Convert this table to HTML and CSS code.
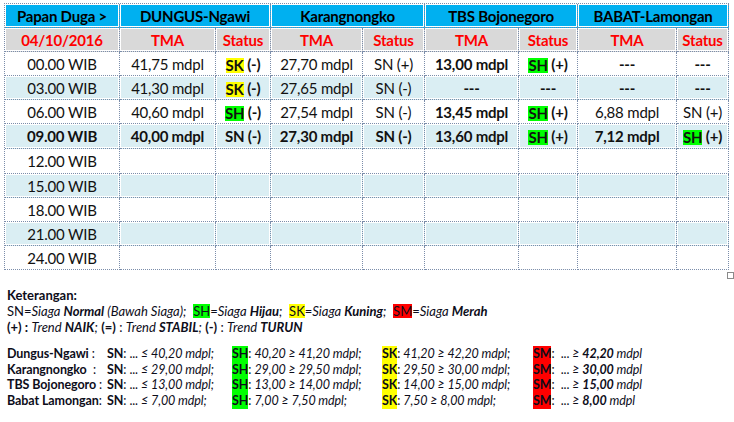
FILE: index.html
```html
<!DOCTYPE html>
<html lang="id">
<head>
<meta charset="utf-8">
<title>Papan Duga</title>
<link rel="stylesheet" href="styles.css">
</head>
<body>
<div class="page">
  <div class="table-wrap">
    <table class="duga">
      <colgroup>
        <col class="w-time"><col class="w-tma1"><col class="w-st1"><col class="w-tma2"><col class="w-st2"><col class="w-tma3"><col class="w-st3"><col class="w-tma4"><col class="w-st4">
      </colgroup>
      <tr class="head1">
        <td>Papan Duga &gt;</td>
        <td colspan="2">DUNGUS-Ngawi</td>
        <td colspan="2">Karangnongko</td>
        <td colspan="2">TBS Bojonegoro</td>
        <td colspan="2">BABAT-Lamongan</td>
      </tr>
      <tr class="head2">
        <td>04/10/2016</td>
        <td>TMA</td><td>Status</td>
        <td>TMA</td><td>Status</td>
        <td>TMA</td><td>Status</td>
        <td>TMA</td><td>Status</td>
      </tr>
      <tr class="row">
        <td>00.00 WIB</td>
        <td>41,75 mdpl</td><td class="b"><span class="hl sk">SK</span> (-)</td>
        <td>27,70 mdpl</td><td>SN (+)</td>
        <td class="b">13,00 mdpl</td><td class="b"><span class="hl sh">SH</span> (+)</td>
        <td class="b">---</td><td class="b">---</td>
      </tr>
      <tr class="row alt">
        <td>03.00 WIB</td>
        <td>41,30 mdpl</td><td class="b"><span class="hl sk">SK</span> (-)</td>
        <td>27,65 mdpl</td><td>SN (-)</td>
        <td class="b">---</td><td class="b">---</td>
        <td class="b">---</td><td class="b">---</td>
      </tr>
      <tr class="row">
        <td>06.00 WIB</td>
        <td>40,60 mdpl</td><td class="b"><span class="hl sh">SH</span> (-)</td>
        <td>27,54 mdpl</td><td>SN (-)</td>
        <td class="b">13,45 mdpl</td><td class="b"><span class="hl sh">SH</span> (+)</td>
        <td>6,88 mdpl</td><td>SN (+)</td>
      </tr>
      <tr class="row alt bold tall">
        <td>09.00 WIB</td>
        <td>40,00 mdpl</td><td>SN (-)</td>
        <td>27,30 mdpl</td><td>SN (-)</td>
        <td>13,60 mdpl</td><td><span class="hl sh">SH</span> (+)</td>
        <td>7,12 mdpl</td><td><span class="hl sh">SH</span> (+)</td>
      </tr>
      <tr class="row tall"><td>12.00 WIB</td><td></td><td></td><td></td><td></td><td></td><td></td><td></td><td></td></tr>
      <tr class="row alt"><td>15.00 WIB</td><td></td><td></td><td></td><td></td><td></td><td></td><td></td><td></td></tr>
      <tr class="row"><td>18.00 WIB</td><td></td><td></td><td></td><td></td><td></td><td></td><td></td><td></td></tr>
      <tr class="row alt"><td>21.00 WIB</td><td></td><td></td><td></td><td></td><td></td><td></td><td></td><td></td></tr>
      <tr class="row"><td>24.00 WIB</td><td></td><td></td><td></td><td></td><td></td><td></td><td></td><td></td></tr>
    </table>
    <span class="handle"></span>
  </div>

  <div class="legend">
    <div class="line"><b>Keterangan:</b></div>
    <div class="line">SN=<i>Siaga <b>Normal</b> (Bawah Siaga);</i>&nbsp; <span class="hl2 sh">SH</span>=<i>Siaga <b>Hijau</b>;</i>&nbsp; <span class="hl2 sk">SK</span>=<i>Siaga <b>Kuning</b>;</i>&nbsp; <span class="hl2 sm">SM</span>=<i>Siaga <b>Merah</b></i></div>
    <div class="line"><b>(+) :</b> <i>Trend <b>NAIK</b>;</i> <b>(=)</b> : <i>Trend <b>STABIL</b>;</i> <b>(-)</b> : <i>Trend <b>TURUN</b></i></div>

    <div class="rules">
      <div class="lbl"><b>Dungus-Ngawi</b> :</div>
      <div><b>SN</b>: ... <i>≤ 40,20 mdpl;</i></div>
      <div><span class="hl3 sh">SH</span>: <i>40,20 ≥ 41,20 mdpl;</i></div>
      <div><span class="hl3 sk">SK</span>: <i>41,20 ≥ 42,20 mdpl;</i></div>
      <div><span class="hl3 sm">SM</span>:&nbsp; ... <i>≥ <b>42,20</b> mdpl</i></div>

      <div class="lbl"><b>Karangnongko</b>&nbsp; :</div>
      <div><b>SN</b>: ... <i>≤ 29,00 mdpl;</i></div>
      <div><span class="hl3 sh">SH</span>: <i>29,00 ≥ 29,50 mdpl;</i></div>
      <div><span class="hl3 sk">SK</span>: <i>29,50 ≥ 30,00 mdpl;</i></div>
      <div><span class="hl3 sm">SM</span>:&nbsp; ... <i>≥ <b>30,00</b> mdpl</i></div>

      <div class="lbl"><b>TBS Bojonegoro</b> :</div>
      <div><b>SN</b>: ... <i>≤ 13,00 mdpl;</i></div>
      <div><span class="hl3 sh">SH</span>: <i>13,00 ≥ 14,00 mdpl;</i></div>
      <div><span class="hl3 sk">SK</span>: <i>14,00 ≥ 15,00 mdpl;</i></div>
      <div><span class="hl3 sm">SM</span>:&nbsp; ... <i>≥ <b>15,00</b> mdpl</i></div>

      <div class="lbl"><b>Babat Lamongan</b>:</div>
      <div><b>SN</b>: ... <i>≤ 7,00 mdpl;</i></div>
      <div><span class="hl3 sh">SH</span>: <i>7,00 ≥ 7,50 mdpl;</i></div>
      <div><span class="hl3 sk">SK</span>: <i>7,50 ≥ 8,00 mdpl;</i></div>
      <div><span class="hl3 sm">SM</span>:&nbsp; ... <i>≥ <b>8,00</b> mdpl</i></div>
    </div>
  </div>
</div>
</body>
</html>
```

FILE: styles.css
```css
html, body {
  margin: 0;
  padding: 0;
  background: #ffffff;
}

body {
  font-family: Lato, "Open Sans", sans-serif;
  color: #000;
}

.page {
  padding: 3px 0 0 4px;
}

.table-wrap {
  position: relative;
  width: 725px;
}

.duga {
  border-collapse: separate;
  border-spacing: 0;
  table-layout: fixed;
  width: 725px;
  border-top: 1px dotted #7b8daa;
  border-left: 1px dotted #7b8daa;
  font-size: 15px;
  letter-spacing: -0.2px;
}

.w-time { width: 115px; }
.w-tma1 { width: 96px; }
.w-st1  { width: 55px; }
.w-tma2 { width: 92px; }
.w-st2  { width: 62px; }
.w-tma3 { width: 94px; }
.w-st3  { width: 59px; }
.w-tma4 { width: 99px; }
.w-st4  { width: 52px; }

.duga td {
  box-sizing: border-box;
  height: 24px;
  padding: 0;
  text-align: center;
  vertical-align: middle;
  white-space: nowrap;
  border-right: 1px dotted #7b8daa;
  border-bottom: 1px dotted #7b8daa;
  box-shadow: inset 0 0 0 1px #ffffff;
  line-height: 18px;
}

.duga tr.tall td { height: 25px; }

.head1 td {
  background: #00b0f0;
  font-weight: 700;
  color: #000;
}

.head2 td {
  background: #d9d9d9;
  font-weight: 700;
  color: #ff0000;
}

.row td { background: #ffffff; color: #111; }
.row.alt td { background: #daeef3; }
.row.bold td { font-weight: 700; }
.duga td.b { font-weight: 700; }

.hl {
  display: inline-block;
  line-height: 15px;
  vertical-align: -1px;
}

.sk { background: #ffff00; }
.sh { background: #00ff00; }
.sm { background: #ff0000; }

.handle {
  position: absolute;
  right: -5px;
  bottom: -9px;
  width: 5px;
  height: 5px;
  border: 1px solid #8a8a8a;
  background: #fff;
}

.legend {
  margin-top: 17px;
  padding-left: 3px;
  font-size: 13px;
  color: #0d0d1a;
}

.legend .line {
  line-height: 16px;
  white-space: nowrap;
}

.hl2 {
  display: inline-block;
  line-height: 14px;
}

.rules {
  margin-top: 11px;
  display: grid;
  grid-template-columns: 100px 125px 150px 151px auto;
  font-size: 12.5px;
  letter-spacing: -0.1px;
  line-height: 15.7px;
  white-space: nowrap;
}

.hl3 {
  display: inline-block;
  height: 15.7px;
  line-height: 15.7px;
  vertical-align: top;
  font-weight: 700;
}
```
